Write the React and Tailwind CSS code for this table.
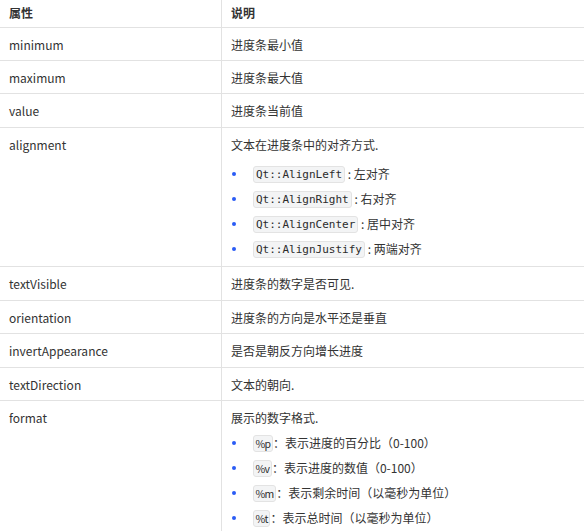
import React from "react";

const font = { fontFamily: '"Noto Sans CJK SC", "Noto Sans", sans-serif' };

function Code({ children }) {
  return (
    <code className="inline-block rounded-[3px] border border-[#e3e3e3] bg-[#f3f4f5] px-[2px] leading-[15px] text-[11px] text-[#2b2b2b] font-['DejaVu_Sans_Mono',monospace]">
      {children}
    </code>
  );
}

function Fmt({ children }) {
  return (
    <code className="inline-block rounded-[3px] border border-[#e3e3e3] bg-[#f3f4f5] px-[1.5px] leading-[15px] text-[10.5px] tracking-[-0.6px] text-[#2b2b2b] font-['Noto_Sans_CJK_SC',sans-serif]">
      {children}
    </code>
  );
}

function Bullet({ children }) {
  return (
    <li className="flex h-[25px] items-center">
      <span className="ml-[1px] mr-[17px] h-[4px] w-[4px] rounded-full bg-[#2a5cf5]" />
      <span className="flex items-center">{children}</span>
    </li>
  );
}

function Row({ name, children, tall }) {
  return (
    <div className="grid grid-cols-[222px_1fr] border-b border-[#e2e2e2]">
      <div className="border-r border-[#e2e2e2] px-[9px] pt-[8px] h-full">
        <div className="leading-[17px]">{name}</div>
      </div>
      <div className={"px-[9px] " + (tall ? "" : "h-[32.4px] pt-[8px]")}>
        {children}
      </div>
    </div>
  );
}

export default function App() {
  return (
    <div className="w-[584px] h-[531px] overflow-hidden bg-white text-[12px] text-[#333]" style={font}>
      <div className="grid grid-cols-[222px_1fr] border-b border-[#e2e2e2] h-[27.6px]">
        <div className="border-r border-[#e2e2e2] px-[9px] pt-[4px] font-bold">属性</div>
        <div className="px-[9px] pt-[4px] font-bold">说明</div>
      </div>
      <Row name="minimum"><div className="leading-[17px]">进度条最小值</div></Row>
      <Row name="maximum"><div className="leading-[17px]">进度条最大值</div></Row>
      <Row name="value"><div className="leading-[17px]">进度条当前值</div></Row>
      <Row name="alignment" tall>
        <div className="h-[138.6px] pt-[8px]">
          <div className="leading-[17px]">文本在进度条中的对齐方式.</div>
          <ul className="mt-[9px]">
            <Bullet><Code>Qt::AlignLeft</Code><span>&nbsp;: 左对齐</span></Bullet>
            <Bullet><Code>Qt::AlignRight</Code><span>&nbsp;: 右对齐</span></Bullet>
            <Bullet><Code>Qt::AlignCenter</Code><span>&nbsp;: 居中对齐</span></Bullet>
            <Bullet><Code>Qt::AlignJustify</Code><span>&nbsp;: 两端对齐</span></Bullet>
          </ul>
        </div>
      </Row>
      <Row name="textVisible"><div className="leading-[17px]">进度条的数字是否可见.</div></Row>
      <Row name="orientation"><div className="leading-[17px]">进度条的方向是水平还是垂直</div></Row>
      <Row name="invertAppearance"><div className="leading-[17px]">是否是朝反方向增长进度</div></Row>
      <Row name="textDirection"><div className="leading-[17px]">文本的朝向.</div></Row>
      <Row name="format" tall>
        <div className="h-[150px] pt-[8px]">
          <div className="leading-[17px]">展示的数字格式.</div>
          <ul className="mt-[5px]">
            <Bullet><Fmt>%p</Fmt><span>：表示进度的百分比（0-100）</span></Bullet>
            <Bullet><Fmt>%v</Fmt><span>：表示进度的数值（0-100）</span></Bullet>
            <Bullet><Fmt>%m</Fmt><span>：表示剩余时间（以毫秒为单位）</span></Bullet>
            <Bullet><Fmt>%t</Fmt><span>：表示总时间（以毫秒为单位）</span></Bullet>
          </ul>
        </div>
      </Row>
    </div>
  );
}
